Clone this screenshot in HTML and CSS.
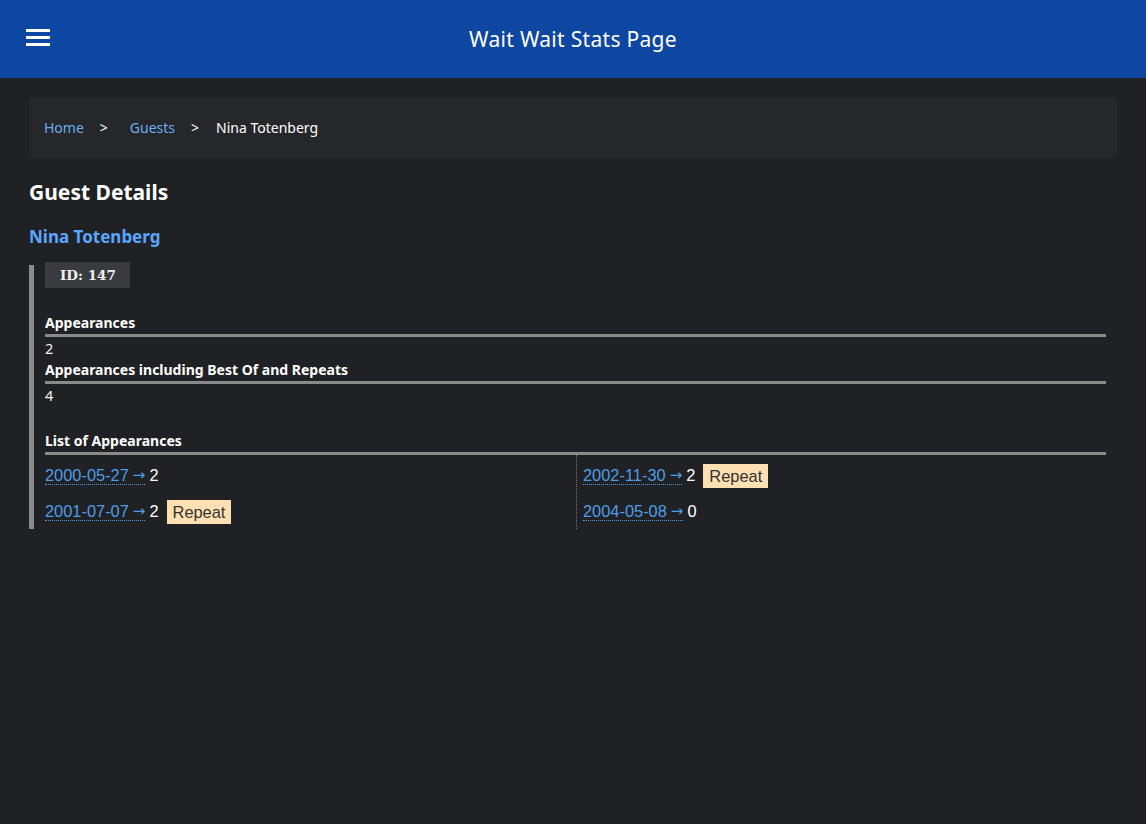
FILE: index.html
```html
<!DOCTYPE html>
<html lang="en">
<head>
<meta charset="utf-8">
<title>Wait Wait Stats Page</title>
<link rel="stylesheet" href="styles.css">
</head>
<body>
<header class="topbar">
  <button class="menu" aria-label="Menu">
    <svg width="24" height="18" viewBox="0 0 24 18"><rect x="0" y="0" width="24" height="3" fill="#fff"/><rect x="0" y="7" width="24" height="3" fill="#fff"/><rect x="0" y="14" width="24" height="3" fill="#fff"/></svg>
  </button>
  <div class="title">Wait Wait Stats Page</div>
</header>
<main class="content">
  <nav class="crumbs">
    <a href="#">Home</a><span class="sep">&gt;</span><a href="#">Guests</a><span class="sep sep-last">&gt;</span><span class="current">Nina Totenberg</span>
  </nav>
  <h1 class="page-title">Guest Details</h1>
  <h2 class="guest-name">Nina Totenberg</h2>
  <section class="guest">
    <div class="id-badge">ID: 147</div>
    <div class="stat stat-first">
      <div class="stat-label">Appearances</div>
      <div class="stat-value">2</div>
    </div>
    <div class="stat">
      <div class="stat-label">Appearances including Best Of and Repeats</div>
      <div class="stat-value">4</div>
    </div>
    <div class="list">
      <div class="stat-label">List of Appearances</div>
      <div class="cols">
        <ul class="col">
          <li><a href="#" class="date">2000-05-27<span class="arrow">→</span></a><span class="num">2</span></li>
          <li><a href="#" class="date">2001-07-07<span class="arrow">→</span></a><span class="num">2</span><span class="repeat">Repeat</span></li>
        </ul>
        <ul class="col col-right">
          <li><a href="#" class="date">2002-11-30<span class="arrow">→</span></a><span class="num">2</span><span class="repeat">Repeat</span></li>
          <li><a href="#" class="date">2004-05-08<span class="arrow">→</span></a><span class="num">0</span></li>
        </ul>
      </div>
    </div>
  </section>
</main>
</body>
</html>
```
FILE: styles.css
```css
html, body {
  margin: 0;
  padding: 0;
}
body {
  background: #202124;
  color: #f1f1f1;
  font-family: "Noto Sans", "Open Sans", "Liberation Sans", sans-serif;
  min-height: 824px;
}
.topbar {
  height: 78px;
  background: #0d47a1;
  display: flex;
  align-items: center;
  position: relative;
}
.menu {
  background: none;
  border: 0;
  padding: 0;
  margin-left: 26px;
  margin-top: -2px;
  width: 24px;
  height: 18px;
  display: flex;
  cursor: pointer;
}
.title {
  position: absolute;
  left: 0;
  right: 0;
  top: 25px;
  text-align: center;
  font-size: 21px;
  line-height: 28px;
  letter-spacing: 0.3px;
  color: #fff;
  pointer-events: none;
}
.content {
  padding: 20px 29px 0 29px;
}
.crumbs {
  background: #26272a;
  height: 59px;
  display: flex;
  align-items: center;
  padding-left: 15px;
  font-size: 14px;
}
.crumbs a {
  color: #6aaef0;
  text-decoration: none;
}
.crumbs .sep {
  color: #fff;
  margin: 0 22px 0 16px;
}
.crumbs .sep-last {
  margin-right: 17px;
}
.crumbs .current {
  color: #fff;
}
.page-title {
  margin: 22px 0 0 0;
  font-size: 21px;
  font-weight: 700;
  line-height: 26px;
  color: #fff;
}
.guest-name {
  margin: 21px 0 0 0;
  font-size: 17px;
  font-weight: 700;
  line-height: 22px;
  color: #58a6ff;
}
.guest {
  margin-top: 17px;
  border-left: 5px solid #8a8a8a;
  padding: 0 11px;
}
.id-badge {
  display: inline-block;
  vertical-align: top;
  background: #3a3b3f;
  font-family: "DejaVu Serif", "Liberation Serif", serif;
  font-weight: 700;
  font-size: 13.5px;
  line-height: 26px;
  padding: 0 14px 0 15px;
  color: #f1f1f1;
  margin-top: -3px;
}
.stat, .list {
  width: 1061px;
}
.stat-first {
  margin-top: 25px;
}
.stat-label {
  font-weight: 700;
  font-size: 14px;
  line-height: 20px;
  padding-bottom: 1px;
  border-bottom: 3px solid #8a8a8a;
  color: #fff;
}
.stat-value {
  font-size: 14.5px;
  line-height: 22px;
}
.stat-first .stat-value {
  line-height: 23px;
}
.list {
  margin-top: 25px;
}
.cols {
  display: grid;
  grid-template-columns: 531px 1fr;
}
.col {
  list-style: none;
  margin: 0;
  padding: 2px 0 0 0;
}
.col-right {
  border-left: 1px dotted #777;
  padding-left: 6px;
}
.col li {
  height: 37px;
  display: flex;
  align-items: center;
  font-family: "Liberation Sans", Arial, sans-serif;
  font-size: 16.4px;
  color: #fff;
}
.col li:last-child {
  height: 35px;
}
.date {
  color: #4e9de6;
  text-decoration: none;
  border-bottom: 1px dotted #4e9de6;
  line-height: 18px;
  display: inline-flex;
  align-items: center;
}
.arrow {
  font-family: "DejaVu Sans", sans-serif;
  font-size: 15px;
  margin-left: 4px;
}
.num {
  margin-left: 4px;
}
.repeat {
  background: #ffe0b2;
  color: #333;
  padding: 0 6px;
  line-height: 24px;
  margin-left: 8px;
}
```
